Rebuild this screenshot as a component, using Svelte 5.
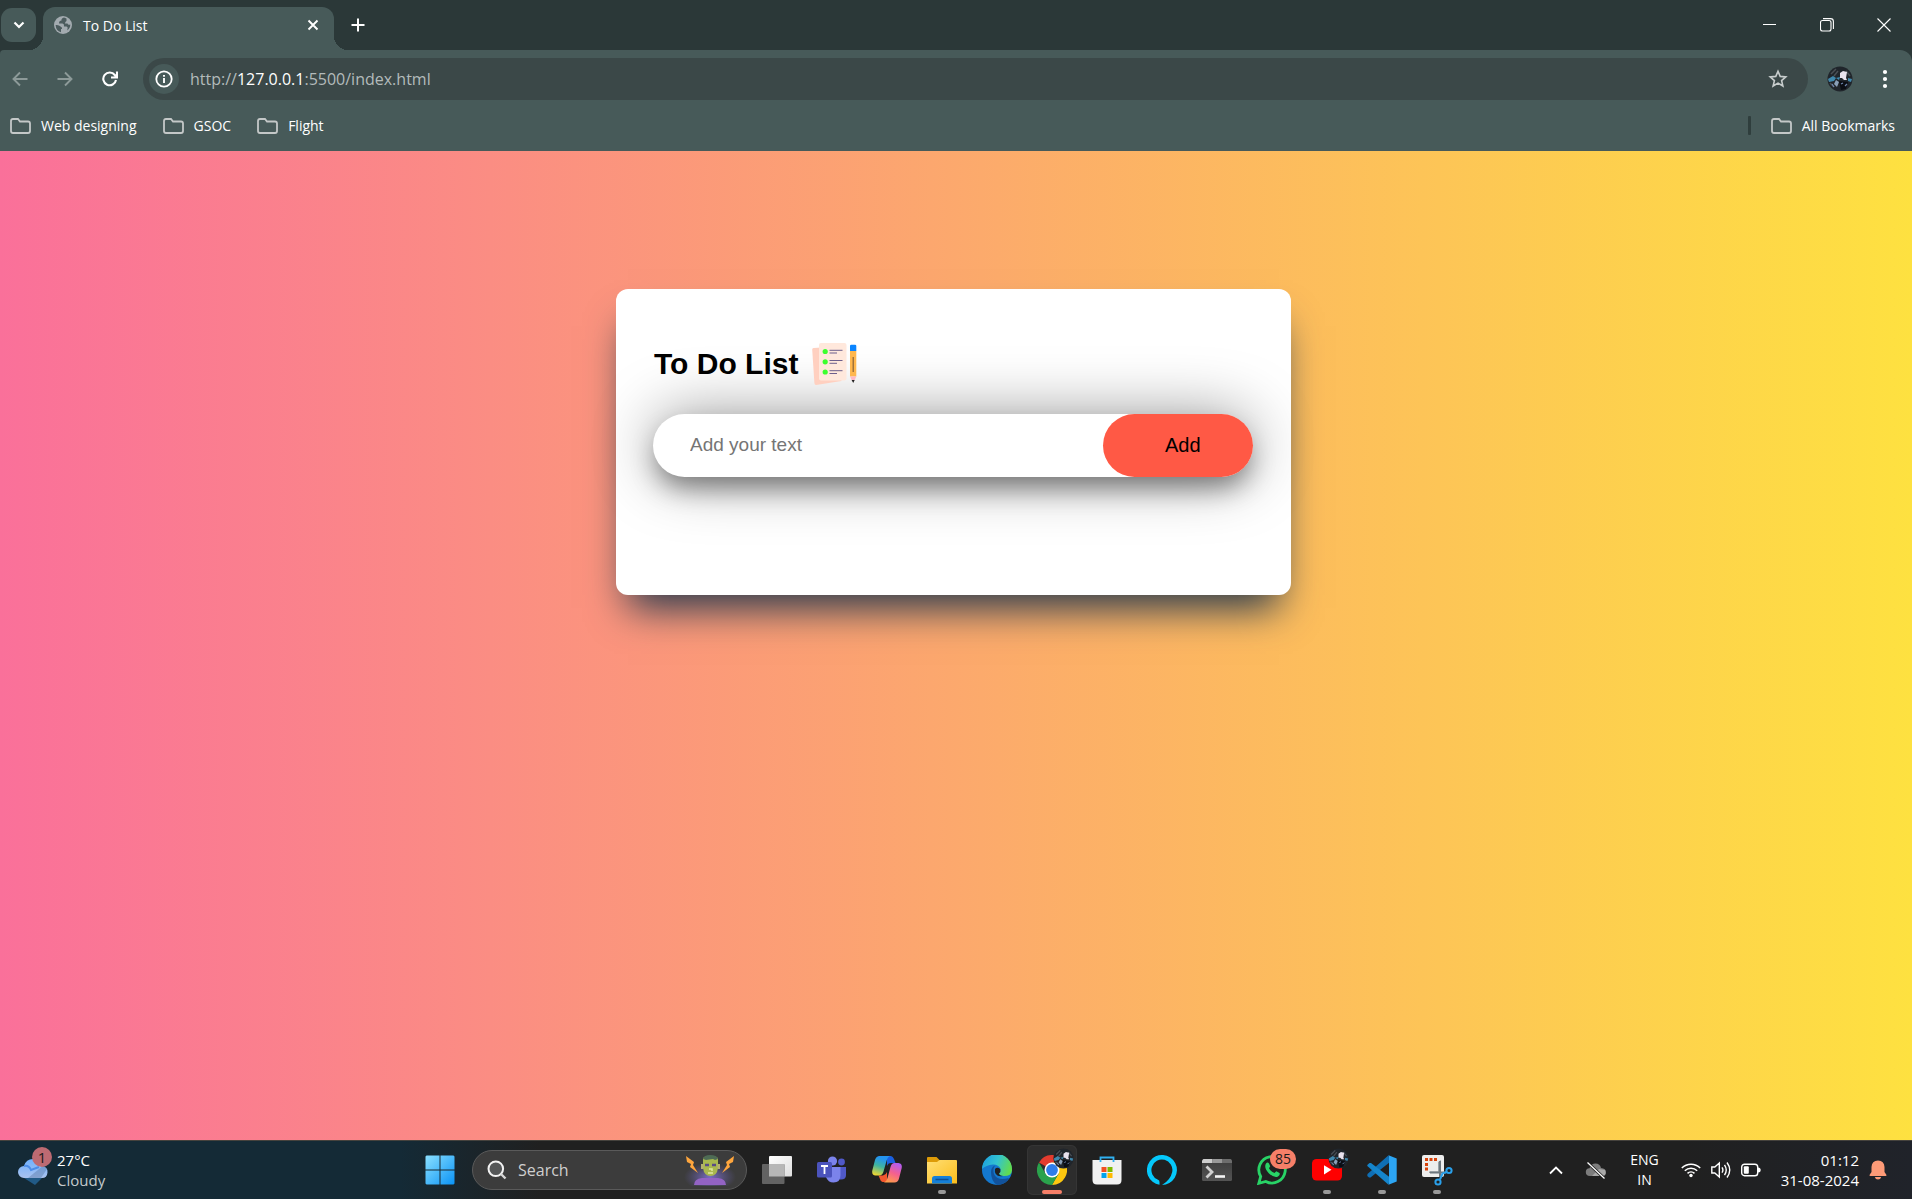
<script>
  let task = $state('');
  let query = $state('');
  const bookmarks = ['Web designing', 'GSOC', 'Flight'];
</script>

{#snippet folder()}
  <svg class="folder" width="21" height="16" viewBox="0 0 21 16" aria-hidden="true">
    <path d="M1 3Q1 1 3 1H8L10 3.5H18Q20 3.5 20 5.500V13Q20 15 18 15H3Q1 15 1 13Z" fill="none" stroke="#c4c8c8" stroke-width="1.8" />
  </svg>
{/snippet}

{#snippet avatar()}
  <svg class="avatar" viewBox="0 0 26 26" aria-hidden="true">
    <circle cx="13" cy="13" r="12.500" fill="#20252b" />
    <path d="M4 8L9 3M7 10L11 5M19 5L23 10M3 17L7 21" stroke="#4a4f55" stroke-width="1.500" />
    <path d="M13 7L16 5L20 6L19 12L20 14L17 14L15 12L13 12Z" fill="#e9e2ee" />
    <path d="M1 13L6 10L9 12L7 15L2 16ZM9 12L13 11L12 14ZM21 12L25 13L24 16L21 15Z" fill="#4088ad" />
    <path d="M9 14L12 16L10 21L7 18Z" fill="#8aa0b8" />
    <path d="M12 15L21 16L19 23L14 24Z" fill="#0a0d14" />
    <path d="M14 18L16 17M18 20L20 18M5 18L7 21" stroke="#6f87b0" stroke-width="1.200" />
  </svg>
{/snippet}

<div class="window">
  <header class="titlebar">
    <button class="tab-search" aria-label="Search tabs">
      <svg width="12" height="8" viewBox="0 0 12 8"><path d="M1.500 1.500L6 6L10.500 1.500" fill="none" stroke="#fff" stroke-width="2.200" /></svg>
    </button>
    <div class="tab">
      <svg width="18" height="18" viewBox="0 0 18 18" aria-hidden="true">
        <circle cx="9" cy="9" r="9" fill="#a3abb0" />
        <path d="M10 1.500Q7 2.500 7.500 4.500Q5 4.500 5 7.500H8.500Q10.500 8 10 10.500H12.500Q14.500 11 13 14.500Q16.500 12 16.300 8.500Q14 9.500 13.500 7.500H11Q11 5.500 12.500 5V2.500ZM1.600 9Q5 8.500 6.500 10.500Q8.500 11 8 13H7V16.300Q2 15 1.600 9Z" fill="#4c5c5e" />
      </svg>
      <span class="tab-title">To Do List</span>
      <button class="bare" aria-label="Close tab">
        <svg width="12" height="12" viewBox="0 0 12 12"><path d="M1.500 1.500L10.500 10.500M10.500 1.500L1.500 10.500" stroke="#fff" stroke-width="1.900" /></svg>
      </button>
    </div>
    <button class="bare new-tab" aria-label="New tab">
      <svg width="14" height="14" viewBox="0 0 14 14"><path d="M7 .5V13.500M.5 7H13.500" stroke="#fff" stroke-width="2" /></svg>
    </button>
    <div class="controls">
      <button class="bare" aria-label="Minimize"><svg width="14" height="14" viewBox="0 0 14 14"><path d="M0 6.500H13" stroke="#fff" /></svg></button>
      <button class="bare" aria-label="Restore">
        <svg width="14" height="14" viewBox="0 0 14 14" fill="none" stroke="#fff"><rect x=".5" y="2.500" width="10.500" height="10.500" rx="2" stroke-width="1.100" /><path d="M3 .6H10.500Q13.400 .6 13.400 3.500V11" stroke-width="1.100" /></svg>
      </button>
      <button class="bare" aria-label="Close"><svg width="14" height="14" viewBox="0 0 14 14"><path d="M.5 .5L13.500 13.500M13.500 .5L.5 13.500" stroke="#fff" stroke-width="1.100" /></svg></button>
    </div>
  </header>

  <nav class="chrome" aria-label="Browser">
    <div class="toolbar">
      <button class="bare nav" aria-label="Back"><svg width="16" height="16" viewBox="0 0 16 16" fill="none" stroke="#8d9a99" stroke-width="1.900"><path d="M15.500 8H2M8 1.500L1.500 8L8 14.500" /></svg></button>
      <button class="bare nav" aria-label="Forward"><svg width="16" height="16" viewBox="0 0 16 16" fill="none" stroke="#8d9a99" stroke-width="1.900"><path d="M.5 8H14M8 1.500L14.500 8L8 14.500" /></svg></button>
      <button class="bare nav" aria-label="Reload"><svg width="16" height="16" viewBox="0 0 16 16" fill="none" stroke="#fff" stroke-width="2.100"><path d="M14 9A6.400 6.400 0 1 1 12.800 4L14.500 6.200M15 .5V6.500H9" /></svg></button>
      <div class="address">
        <button class="info" aria-label="Site information">
          <svg width="18" height="18" viewBox="0 0 18 18"><circle cx="9" cy="9" r="7.700" fill="none" stroke="#fff" stroke-width="1.800" /><path d="M9 8V13M9 5V6.800" stroke="#fff" stroke-width="1.900" /></svg>
        </button>
        <span class="url">http://<b>127.0.0.1</b>:5500/index.html</span>
        <button class="bare" aria-label="Bookmark this page">
          <svg width="20" height="20" viewBox="0 0 20 20"><path d="M10 2.200L12.200 7.400L17.800 7.900L13.600 11.600L14.900 17L10 14.100L5.100 17L6.400 11.600L2.200 7.900L7.800 7.400Z" fill="none" stroke="#c8cdcd" stroke-width="1.600" /></svg>
        </button>
      </div>
      <button class="bare profile" aria-label="Profile">{@render avatar()}</button>
      <button class="bare menu" aria-label="Menu"><svg width="6" height="20" viewBox="0 0 6 20" fill="#fff"><circle cx="3" cy="3" r="2.100" /><circle cx="3" cy="10" r="2.100" /><circle cx="3" cy="17" r="2.100" /></svg></button>
    </div>
    <div class="bookmarks">
      {#each bookmarks as name}
        <a href="#bookmark">{@render folder()}{name}</a>
      {/each}
      <span class="divider"></span>
      <a href="#all">{@render folder()}All Bookmarks</a>
    </div>
  </nav>

  <main>
    <section class="card">
      <h2>
        To Do List
        <svg width="46" height="42" viewBox="0 0 46 42" aria-hidden="true">
          <path d="M1.500 5L26 3.500L29.500 38L4 42Q2.500 42 2.400 40L.2 6.500Q.2 5 1.500 5Z" fill="#ffd0c0" />
          <rect x="7" y="0" width="27.500" height="37.500" rx="2" fill="#ffe8dc" />
          <g fill="#3cff2e"><circle cx="13.200" cy="8.500" r="2.600" /><circle cx="13.200" cy="18.800" r="2.600" /><circle cx="13.200" cy="29" r="2.600" /></g>
          <path d="M17.500 7.300H30.500M17.500 10H25M17.500 17.500H30.500M17.500 20.300H25M17.500 27.700H30.500M17.500 30.500H25" stroke="#6d5f8c" stroke-width="1" />
          <path d="M38 3Q38 1.700 39.300 1.700H43Q44.300 1.700 44.300 3V8H38Z" fill="#0a84ff" />
          <path d="M38 8H44.300V33.500H38Z" fill="#ffb74d" />
          <path d="M41.200 14V29" stroke="#8a6236" stroke-width="1.200" />
          <path d="M38 33.500H44.300L42.500 37.500H39.800Z" fill="#ffb9c4" />
          <path d="M39.600 37H42.700L41.200 40Z" fill="#222" />
        </svg>
      </h2>
      <form class="row" onsubmit={(e) => e.preventDefault()}>
        <input type="text" placeholder="Add your text" aria-label="Add your text" bind:value={task} />
        <button type="submit">Add</button>
      </form>
    </section>
  </main>

  <footer class="taskbar">
    <button class="weather bare" aria-label="Weather">
      <span class="weather-icon">
        <svg width="32" height="30" viewBox="0 0 32 30" aria-hidden="true">
          <defs><linearGradient id="cl" x1="0" y1="0" x2="0" y2="1"><stop offset="0" stop-color="#6fb1ff" /><stop offset="1" stop-color="#a9c2ee" /></linearGradient></defs>
          <path d="M7 23L18 30L26 22Z" fill="#215a86" />
          <path d="M7 23A6 6 0 0 1 7 11Q9 4 16 4Q24 4 25 11Q31 12 30.500 17.500Q30 23 25 23Z" fill="url(#cl)" />
          <path d="M7 11Q12 10 14 15L22 12" fill="none" stroke="#4c8de8" stroke-width="2" />
          <path d="M11 23L27 10L30 14L24 23Z" fill="#5f7fae" opacity=".5" />
        </svg>
        <span class="weather-badge">1</span>
      </span>
      <span class="two-lines"><span>27°C</span><span class="dim">Cloudy</span></span>
    </button>

    <div class="apps">
      <button class="app" aria-label="Start">
        <svg width="30" height="30" viewBox="0 0 30 30">
          <defs><linearGradient id="win" x1="0" y1="0" x2="1" y2="1"><stop offset="0" stop-color="#8be0ff" /><stop offset="1" stop-color="#0a93f5" /></linearGradient></defs>
          <path d="M1.500 .5H14.500V14.500H.5V1.500ZM15.500 .5H28.500L29.500 1.500V14.500H15.500ZM.5 15.500H14.500V29.500H1.500L.5 28.500ZM15.500 15.500H29.500V28.500L28.500 29.500H15.500Z" fill="url(#win)" />
        </svg>
      </button>
      <label class="search">
        <svg width="20" height="20" viewBox="0 0 20 20" aria-hidden="true"><circle cx="8.800" cy="8.800" r="7.300" fill="#6d7274" fill-opacity=".5" stroke="#f2f2f2" stroke-width="2" /><path d="M14 14L18.500 18.500" stroke="#d6d6d6" stroke-width="2.400" /></svg>
        <input type="text" placeholder="Search" aria-label="Search" bind:value={query} />
        <svg width="52" height="32" viewBox="0 0 52 32" aria-hidden="true">
          <defs><radialGradient id="glow"><stop offset="0" stop-color="#8b79e8" /><stop offset="1" stop-color="#6b63b8" stop-opacity="0" /></radialGradient></defs>
          <ellipse cx="26" cy="23" rx="26" ry="14" fill="url(#glow)" opacity=".8" />
          <path d="M2 2L10 8L9 11L14 19L6 13L7 10L3 8Z" fill="#ffa63d" />
          <path d="M50 2L42 8L43 11L38 19L46 13L45 10L49 8Z" fill="#ffa63d" />
          <path d="M10 31Q10 25 18 24H34Q42 25 42 31Z" fill="#9363c4" />
          <path d="M19 5Q19 2 26 2Q34 2 34 5V14Q33 22 26.500 22Q20 22 19 14Z" fill="#a9b84e" />
          <path d="M19 5Q20 1 26 1Q33 1 34 5L31 6L29 5L22 6Z" fill="#4e6b55" />
          <rect x="17" y="10" width="2.500" height="5" fill="#b4b070" /><rect x="33.500" y="10" width="2.500" height="5" fill="#b4b070" />
          <path d="M21 11H25M28 11H32" stroke="#5a4b87" stroke-width="2.500" />
          <path d="M25 15H28V17M24 19H29" stroke="#dfe6a0" stroke-width="1.500" fill="none" />
        </svg>
      </label>
      <button class="app" aria-label="Task view">
        <svg width="30" height="30" viewBox="0 0 30 30">
          <defs><linearGradient id="tv" x1="0" y1="0" x2="1" y2="1"><stop offset="0" stop-color="#fff" /><stop offset="1" stop-color="#dedede" /></linearGradient></defs>
          <rect x="7" y="1" width="23" height="20.500" rx="1" fill="url(#tv)" />
          <rect x="0" y="9" width="22.500" height="20" rx="1" fill="#636363" />
          <rect x="7" y="9" width="15.500" height="12.500" fill="#b7b7b7" />
        </svg>
      </button>
      <button class="app" aria-label="Teams">
        <svg width="30" height="30" viewBox="0 0 30 30">
          <circle cx="24.500" cy="7" r="3.400" fill="#5059c9" /><circle cx="15.500" cy="6" r="4.600" fill="#7b83eb" />
          <path d="M21 12H29V20Q29 24.500 24 24.500H21Z" fill="#5059c9" />
          <path d="M10 12H23.500V20Q23.500 27.500 16.500 27.500Q11 27.500 9 22Z" fill="#7b83eb" />
          <rect x="0" y="7" width="15" height="15.500" rx="1.500" fill="#4b53bc" />
          <path d="M4 11H11M7.500 11V19" stroke="#fff" stroke-width="1.800" />
        </svg>
      </button>
      <button class="app" aria-label="Copilot">
        <svg width="30" height="30" viewBox="0 0 30 30">
          <defs>
            <linearGradient id="cpa" x1=".5" y1="0" x2=".2" y2="1"><stop offset=".1" stop-color="#2494f0" /><stop offset=".5" stop-color="#3fb4a0" /><stop offset="1" stop-color="#f5d82e" /></linearGradient>
            <linearGradient id="cpb" x1=".7" y1="0" x2=".3" y2="1"><stop offset="0" stop-color="#b35cf0" /><stop offset=".5" stop-color="#f4608f" /><stop offset="1" stop-color="#ff9d4a" /></linearGradient>
          </defs>
          <path d="M15 1H19Q21 1.300 22 4L23.500 8H19Q16 8 15 11Z" fill="#1a5fe0" />
          <path d="M15 27H10.500Q8.500 26.500 8 24L6.500 20.500H11Q14 20 15 17Z" fill="#f4572e" />
          <path d="M7 1H18Q15.500 2 14.500 6L11.500 16.500Q10.500 20.500 7 20.500H3.500Q-.5 20 .3 15.500L3 5Q4 1.500 7 1Z" fill="url(#cpa)" />
          <path d="M22.500 8H26.500Q30.500 8.500 29.700 13L27 23.500Q26 27.500 22.500 27.500H12Q14.500 26.500 15.500 23L18.500 12Q19.500 8 22.500 8Z" fill="url(#cpb)" />
        </svg>
      </button>
      <button class="app running" aria-label="File Explorer">
        <svg width="30" height="30" viewBox="0 0 30 30">
          <defs><linearGradient id="fe" x1="0" y1="0" x2="1" y2="1"><stop offset="0" stop-color="#ffdf75" /><stop offset="1" stop-color="#fbbd1b" /></linearGradient></defs>
          <path d="M0 3Q0 2 1 2H9.500L12.500 5V10H0Z" fill="#dd9b08" />
          <path d="M0 7H10L12.500 5H29Q30 5 30 6V28.500H0Z" fill="url(#fe)" />
          <path d="M5 28.500V23.500Q5 21 7.500 21H22.500Q25 21 25 23.500V28.500Z" fill="#1580d8" />
          <path d="M8.500 24.500H21.500" stroke="#0c4f94" stroke-width="1.500" />
        </svg>
      </button>
      <button class="app" aria-label="Edge">
        <svg width="30" height="30" viewBox="0 0 30 30">
          <defs>
            <linearGradient id="eg" x1="0" y1=".2" x2="1" y2=".5"><stop offset="0" stop-color="#1b9de0" /><stop offset=".5" stop-color="#33c3d0" /><stop offset="1" stop-color="#62dc4e" /></linearGradient>
          </defs>
          <circle cx="15" cy="15" r="15" fill="#1478cf" />
          <path d="M0 14A15 15 0 0 1 30 14Q30.500 21 22 21Q17 21 17 18.500Q19 17 18.500 14Q17 9.500 11 9.500Q4 10 0 14Z" fill="url(#eg)" />
          <path d="M9 17Q9 12 13 10.500Q10 15 12.500 20Q16 26 27 23Q24 29.500 15 30Q9 26 9 17Z" fill="#12529b" />
          <path d="M13 14Q15 11.500 18.300 14Q19 17 17 18.500Q17.500 20.500 21 21Q16 22 13.800 19Q12.500 16.500 13 14Z" fill="#202020" />
        </svg>
      </button>
      <button class="app active" aria-label="Chrome">
        <svg width="30" height="30" viewBox="0 0 30 30">
          <path d="M15 15L2 7.500A15 15 0 0 1 28 7.500L15 7.500Z" fill="#e33b2e" />
          <path d="M15 7.500H28A15 15 0 0 1 15 30L21.500 18.700Z" fill="#fdc70f" />
          <path d="M21.500 18.700L15 30A15 15 0 0 1 2 7.500L8.500 18.700Z" fill="#2aa24c" />
          <circle cx="15" cy="15" r="7.500" fill="#fff" /><circle cx="15" cy="15" r="5.900" fill="#2f7de9" />
        </svg>
        <span class="corner">{@render avatar()}</span>
      </button>
      <button class="app" aria-label="Microsoft Store">
        <svg width="30" height="30" viewBox="0 0 30 30">
          <path d="M.5 5H29.500V25Q29.500 29.500 25 29.500H5Q.5 29.500 .5 25Z" fill="#f1f1f1" />
          <path d="M8.500 7V2.500H21.500V7" fill="none" stroke="#2fb0f0" stroke-width="1.800" />
          <path d="M9.500 12H14.500V17H9.500Z" fill="#f25022" /><path d="M15.500 12H20.500V17H15.500Z" fill="#7fba00" />
          <path d="M9.500 18H14.500V23H9.500Z" fill="#00a4ef" /><path d="M15.500 18H20.500V23H15.500Z" fill="#ffb900" />
        </svg>
      </button>
      <button class="app" aria-label="Alexa">
        <svg width="30" height="30" viewBox="0 0 30 30"><path d="M12.500 29.800A15 15 0 1 1 15 30Q23.500 25 25.200 17A10.500 10.500 0 1 0 11 24.700Q12.500 25.200 12.500 27Z" fill="#05c8fb" /></svg>
      </button>
      <button class="app" aria-label="Terminal">
        <svg width="30" height="30" viewBox="0 0 30 30">
          <defs><linearGradient id="tm" x1="0" y1="0" x2="0" y2="1"><stop offset="0" stop-color="#3c3c3c" /><stop offset="1" stop-color="#545454" /></linearGradient></defs>
          <rect x="0" y="4" width="30" height="22" rx="1.500" fill="url(#tm)" />
          <path d="M1.500 4H10.500V8H0V5.500Z" fill="#cdcdcd" /><path d="M10.500 4H20V8H10.500Z" fill="#999" /><path d="M20 4H28.500L30 5.500V8H20Z" fill="#6d6d6d" />
          <path d="M4.500 11.500L10 17L4.500 22.500" fill="none" stroke="#d0d0d0" stroke-width="2.800" /><path d="M13 21.500H23" stroke="#f4f4f4" stroke-width="2.600" />
        </svg>
      </button>
      <button class="app" aria-label="WhatsApp, 85 messages">
        <svg width="30" height="30" viewBox="0 0 30 30">
          <path d="M1.800 28.300L3.700 21.500A13.200 13.200 0 1 1 8.800 26.400Z" fill="none" stroke="#28d366" stroke-width="2.800" />
          <path d="M9 8.500Q10.500 6.500 12 8.500L13.200 11.200L12 13.200Q14 16.800 17.500 18L19.300 16.300L22.500 18Q23.500 19.500 21 21.500Q17.500 23.500 12 18.500Q6.500 12.500 9 8.500Z" fill="#28d366" />
        </svg>
        <span class="count">85</span>
      </button>
      <button class="app running" aria-label="YouTube">
        <svg width="30" height="30" viewBox="0 0 30 30"><rect x="0" y="4" width="30" height="21.500" rx="4.500" fill="#f00" /><path d="M12 10.200L19.500 14.800L12 19.400Z" fill="#fff" /></svg>
        <span class="corner">{@render avatar()}</span>
      </button>
      <button class="app running" aria-label="Visual Studio Code">
        <svg width="30" height="30" viewBox="0 0 30 30">
          <path d="M.5 19L21.500 .3L23 7L3.500 22.500H2L.3 21Z" fill="#0f6fb5" />
          <path d="M.3 10L2.500 8H4L23 22.500L21.500 29.800L.3 11Z" fill="#1585cc" />
          <path d="M21.500 .3L29.700 3.500V26.500L21.500 29.800Q22 29 22 28V2Q22 1 21.500 .3Z" fill="#2ca5f3" />
        </svg>
      </button>
      <button class="app running" aria-label="Snipping Tool">
        <svg width="30" height="30" viewBox="0 0 30 30" overflow="visible">
          <rect x="0" y="0" width="22" height="22" rx="2" fill="#ededed" />
          <path d="M3 4.500H16M4.500 8V17" stroke="#d8420b" stroke-width="3" stroke-dasharray="3 1.500" fill="none" />
          <path d="M16 7L19 5V18H7V16.500H16Z" fill="#9aa2a8" />
          <path d="M18 6V22M8 17.500H24" stroke="#6d777e" stroke-width="2" />
          <g fill="none" stroke="#2aa0ea" stroke-width="2"><circle cx="27" cy="15.500" r="2.600" /><circle cx="16" cy="27" r="2.600" /><path d="M24.500 17L20.500 18.500L18 24.500" /></g>
        </svg>
      </button>
    </div>

    <div class="tray">
      <button class="bare" aria-label="Show hidden icons"><svg width="14" height="9" viewBox="0 0 14 9"><path d="M1 7.500L7 1.500L13 7.500" fill="none" stroke="#fff" stroke-width="1.800" /></svg></button>
      <svg class="cloud" width="22" height="18" viewBox="0 0 22 18" aria-hidden="true">
        <path d="M5 15Q.8 15 .8 11Q.8 7.500 4.500 7.200Q6 2.500 10.500 2.500Q15 2.500 16 7Q21 7.500 21 11Q21 15 17 15Z" fill="#7d7d7d" /><path d="M7 15L14 8L20 9Q22 15 17 15Z" fill="#a8a8a8" />
        <path d="M2.500 1.500L19.500 17.500" stroke="#202020" stroke-width="3" /><path d="M2.500 1.500L19.500 17.500" stroke="#fff" stroke-width="1.200" />
      </svg>
      <button class="bare lang">ENG<br />IN</button>
      <button class="bare status" aria-label="Network, volume and battery">
        <svg width="20" height="16" viewBox="0 0 20 16" fill="none" stroke="#fff" stroke-width="1.500"><path d="M.8 6A13 13 0 0 1 19.200 6M3.800 8.700A9 9 0 0 1 16.200 8.700M6.500 11.400A5 5 0 0 1 13.500 11.400" /><circle cx="10" cy="13.500" r="1.700" fill="#fff" stroke="none" /></svg>
        <svg width="20" height="18" viewBox="0 0 20 18" fill="none" stroke="#fff" stroke-width="1.400"><path d="M.8 6H3.800L8.300 2V16L3.800 12H.8ZM11 6.300Q12.800 9 11 11.700M13.500 3.800Q17 9 13.500 14.200M16 1.500Q21.500 9 16 16.500" /></svg>
        <svg width="20" height="14" viewBox="0 0 20 14"><rect x=".7" y="1.200" width="16" height="11.500" rx="2.800" fill="none" stroke="#fff" stroke-width="1.400" /><rect x="2.800" y="3.300" width="5" height="7.400" rx="1" fill="#fff" /><path d="M17 4.500Q19.700 4.500 19.700 7Q19.700 9.500 17 9.500Z" fill="#fff" /></svg>
      </button>
      <button class="bare clock">01:12<br />31-08-2024</button>
      <button class="bare" aria-label="Notifications"><svg width="18" height="20" viewBox="0 0 18 20" fill="#fd9a77"><path d="M9 .5Q15.200 .8 15.500 7V12L17.500 15Q17.800 16 16.500 16H1.500Q.2 16 .5 15L2.500 12V7Q2.800 .8 9 .5Z" /><path d="M5.800 17H12.200Q11.500 19.500 9 19.500Q6.500 19.500 5.800 17Z" /></svg></button>
    </div>
  </footer>
</div>

<style>
  :global(body) { margin: 0; }
  .window {
    --frame: #2b3838;
    --surface: #475a59;
    display: flex;
    flex-direction: column;
    min-height: 100vh;
    font-family: 'Open Sans', 'Noto Sans', sans-serif;
    font-size: 14px;
    color: #fff;
  }
  button, input { font: inherit; color: inherit; border: 0; margin: 0; box-sizing: border-box; }
  button { cursor: pointer; }
  svg { display: block; flex: none; }
  .bare { background: none; padding: 0; display: flex; align-items: center; justify-content: center; }

  .titlebar { display: flex; align-items: center; height: 50px; background: var(--frame); padding-left: 1px; box-sizing: border-box; }
  .tab-search {
    width: 35px; height: 34px; border-radius: 11px; background: var(--surface); padding: 0;
    display: flex; align-items: center; justify-content: center;
  }
  .tab {
    position: relative; align-self: flex-end; box-sizing: border-box;
    display: flex; align-items: center; gap: 11px; width: 291px; height: 43px;
    margin-left: 7px; padding: 0 15px 7px 11px;
    background: var(--surface); border-radius: 12px 12px 0 0;
  }
  .tab::before, .tab::after { content: ''; position: absolute; bottom: 0; width: 14px; height: 14px; }
  .tab::before { right: 100%; background: radial-gradient(circle at 0 0, transparent 14px, var(--surface) 14px); }
  .tab::after { left: 100%; background: radial-gradient(circle at 100% 0, transparent 14px, var(--surface) 14px); }
  .tab-title { flex: 1; }
  .new-tab { margin-left: 17px; }
  .controls { display: flex; margin-left: auto; }
  .controls button { width: 57px; height: 48px; }

  .chrome { background: linear-gradient(var(--frame), var(--frame)) top / 100% 12px no-repeat, var(--surface); }
  .toolbar { display: flex; align-items: center; height: 58px; background: var(--surface); border-radius: 4px 12px 0 0; padding: 0 13px 0 12px; }
  .nav { width: 16px; margin-right: 29px; }
  .address {
    flex: 1; display: flex; align-items: center; box-sizing: border-box; height: 42px;
    margin-left: -4px; padding: 0 20px 0 6px; border-radius: 21px; background: #3b4848;
  }
  .info { width: 30px; height: 30px; border-radius: 50%; background: var(--surface); padding: 0; display: flex; align-items: center; justify-content: center; }
  .url { flex: 1; margin-left: 11px; font-size: 16px; color: #b3bbbb; }
  .url b { font-weight: 400; color: #fff; }
  .profile { width: 26px; margin-left: 19px; }
  .avatar { width: 100%; }
  .menu { width: 28px; margin-left: 18px; }
  .bookmarks { display: flex; align-items: center; height: 35px; padding: 0 17px 8px 10px; gap: 26px; }
  .bookmarks a { display: flex; align-items: center; gap: 10px; color: #fff; text-decoration: none; white-space: nowrap; }
  .divider { width: 3px; height: 19px; margin-left: auto; margin-right: -6px; border-radius: 1px; background: #2f3e3d; }

  main {
    flex: 1; display: flex; justify-content: center; align-items: flex-start;
    padding: 138px 5px 40px 0;
    background: linear-gradient(to right, #fa709a, #fee140);
    font-family: Arial, 'Liberation Sans', sans-serif; color: #000;
  }
  .card {
    width: 100%; max-width: 675px; box-sizing: border-box; padding: 50px 38px 118px 37px;
    background: #fff; border-radius: 12px;
    box-shadow: 0 25px 38px -12px rgb(38, 57, 77);
  }
  h2 { display: flex; align-items: center; gap: 14px; height: 50px; margin: 0 0 25px; padding-left: 1px; font-size: 30px; font-weight: 700; }
  .row {
    display: flex; height: 63px; border-radius: 32px; background: #fff;
    box-shadow: 0 14px 26px -4px rgba(0, 0, 0, .42), 0 0 62px rgba(0, 0, 0, .4);
  }
  .row input { flex: 1; min-width: 0; padding: 0 12px 2px 37px; background: none; outline: 0; font-size: 19px; }
  .row input::placeholder { color: #757575; opacity: 1; }
  .row button { width: 150px; padding: 0 0 0 62px; text-align: left; font-size: 20px; border-radius: 32px; background: #ff5945; }

  .taskbar {
    display: grid; grid-template-columns: 415px auto 1fr; align-items: center; height: 59px;
    box-sizing: border-box; border-top: 1px solid #45423d;
    background: linear-gradient(to right, #142a36 0, #142a36 400px, #202020 540px, #202020 88%, #20232a 100%);
    font-size: 15px; line-height: 20px;
  }
  .weather { justify-self: start; margin-left: 17px; gap: 8px; }
  .weather-icon { position: relative; }
  .weather-badge {
    position: absolute; top: -8px; right: -3px; width: 20px; height: 20px; border-radius: 50%;
    background: #bd6a72; color: #1b1b1b; text-align: center;
  }
  .two-lines { display: flex; flex-direction: column; align-items: flex-start; }
  .dim { color: #c5cacc; }
  .apps { display: flex; align-items: center; gap: 5px; }
  .app {
    position: relative; width: 50px; height: 50px; padding: 0; border-radius: 6px; background: none;
    display: flex; align-items: center; justify-content: center;
  }
  .app.active { background: #2d2d2d; box-shadow: inset 0 0 0 1px #353535; }
  .running::after, .active::after {
    content: ''; position: absolute; bottom: 1px; left: 50%; width: 8px; height: 4px; margin-left: -4px;
    border-radius: 2px; background: #999;
  }
  .active::after { width: 20px; margin-left: -10px; background: #f67f68; }
  .corner { position: absolute; top: 3px; right: 3px; width: 21px; }
  .count {
    position: absolute; top: 4px; right: 1px; width: 26px; height: 20px; border-radius: 10px;
    background: #f67f68; color: #1b1b1b; font-size: 14px; text-align: center;
  }
  .search {
    display: flex; align-items: center; box-sizing: border-box; width: 275px; height: 40px; margin-left: 2px;
    padding: 0 10px 0 14px; border-radius: 20px; background: #3c3c3c; border: 1px solid #5a5a5a;
  }
  .search input { flex: 1; min-width: 0; padding: 0 0 0 11px; background: none; outline: 0; font-size: 16px; }
  .search input::placeholder { color: #cfcfcf; opacity: 1; }
  .tray { display: flex; align-items: center; justify-content: flex-end; padding-right: 25px; }
  .cloud { margin-left: 22px; }
  .lang { margin-left: 23px; font-size: 14px; }
  .status { gap: 10px; margin-left: 22px; }
  .clock { margin-left: 20px; margin-right: 10px; text-align: right; }
</style>
